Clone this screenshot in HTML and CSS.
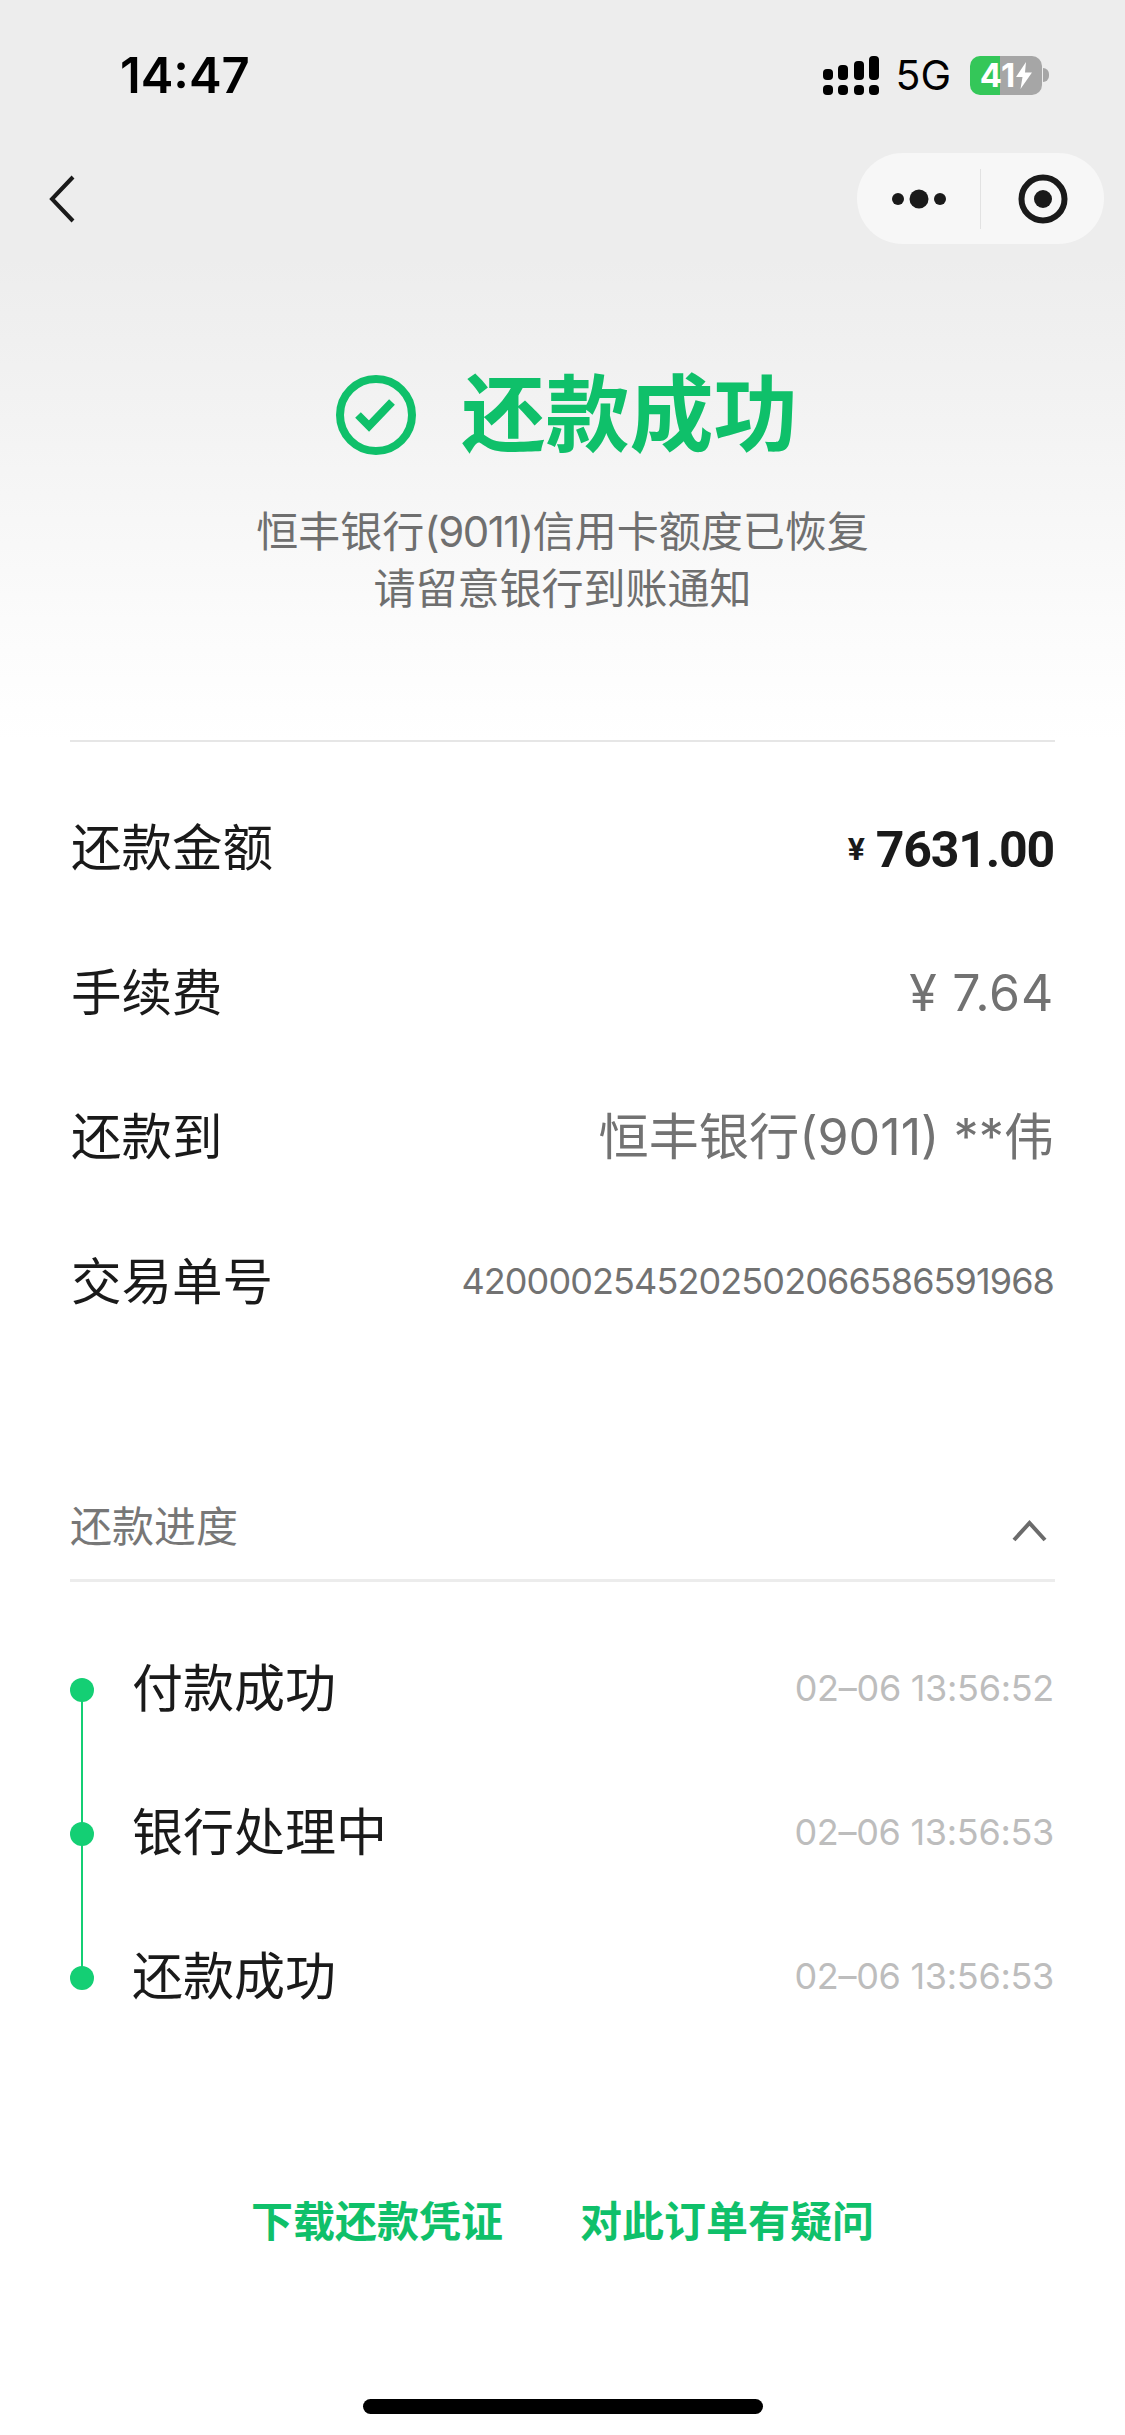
FILE: index.html
```html
<!DOCTYPE html>
<html lang="zh-CN">
<head>
    <meta charset="UTF-8">
    <meta name="viewport" content="width=device-width, initial-scale=1.0">
    <title>还款成功</title>
    <link rel="stylesheet" href="styles.css">
</head>
<body>
    <div class="page">
        <!-- Status bar -->
        <div class="status-bar">
            <span class="clock">14:47</span>
            <div class="status-icons">
                <svg class="signal" width="56" height="39" viewBox="0 0 56 39">
                    <rect x="0" y="13" width="10" height="11" rx="4"/>
                    <rect x="15" y="9" width="10" height="15" rx="4"/>
                    <rect x="31" y="5" width="10" height="19" rx="4"/>
                    <rect x="46" y="0" width="10" height="24" rx="4"/>
                    <rect x="0" y="29" width="10" height="10" rx="4"/>
                    <rect x="15" y="29" width="10" height="10" rx="4"/>
                    <rect x="31" y="29" width="10" height="10" rx="4"/>
                    <rect x="46" y="29" width="10" height="10" rx="4"/>
                </svg>
                <span class="network">5G</span>
                <div class="battery">
                    <span class="battery-level">41</span>
                    <svg width="16" height="27" viewBox="0 0 16 27">
                        <path d="M10 0 L0 15 H6.5 L4.5 27 L16 10.5 H9 Z" fill="#fff"/>
                    </svg>
                </div>
                <span class="battery-nub"></span>
            </div>
        </div>

        <!-- Nav bar -->
        <div class="nav-bar">
            <svg class="back" width="26" height="48" viewBox="0 0 26 48">
                <path d="M24 2 L3 24 L24 46" fill="none" stroke="#1a1a1a" stroke-width="4"/>
            </svg>
            <div class="capsule">
                <div class="capsule-part">
                    <svg width="54" height="20" viewBox="0 0 54 20">
                        <circle cx="6" cy="10" r="6"/>
                        <circle cx="27" cy="10" r="9.5"/>
                        <circle cx="48" cy="10" r="6"/>
                    </svg>
                </div>
                <div class="capsule-line"></div>
                <div class="capsule-part">
                    <svg width="50" height="50" viewBox="0 0 50 50">
                        <circle cx="25" cy="25" r="21.5" fill="none" stroke="#1a1a1a" stroke-width="6"/>
                        <circle cx="25" cy="25" r="9"/>
                    </svg>
                </div>
            </div>
        </div>

        <!-- Result -->
        <div class="hero">
            <div class="hero-title">
                <svg width="80" height="80" viewBox="0 0 80 80">
                    <circle cx="40" cy="40" r="36" fill="none" stroke="#0fc06a" stroke-width="8"/>
                    <path d="M22 40 L33 51 L56 27" fill="none" stroke="#0fc06a" stroke-width="8"/>
                </svg>
                <h1>还款成功</h1>
            </div>
            <p class="hero-note">恒丰银行<span class="tight">(9011)</span>信用卡额度已恢复<br>请留意银行到账通知</p>
        </div>

        <!-- Details -->
        <div class="details">
            <div class="row">
                <span class="label">还款金额</span>
                <span class="amount"><span class="yen">¥</span>7631.00</span>
            </div>
            <div class="row">
                <span class="label">手续费</span>
                <span class="value fee">¥ 7.64</span>
            </div>
            <div class="row">
                <span class="label">还款到</span>
                <span class="value bank">恒丰银行(9011) **伟</span>
            </div>
            <div class="row">
                <span class="label">交易单号</span>
                <span class="order-no">4200002545202502066586591968</span>
            </div>
        </div>

        <!-- Progress -->
        <div class="progress">
            <div class="progress-head">
                <span>还款进度</span>
                <svg width="35" height="22" viewBox="0 0 35 22">
                    <path d="M2 20 L17.5 3 L33 20" fill="none" stroke="#6b6b6b" stroke-width="4"/>
                </svg>
            </div>
            <ul class="steps">
                <li class="step">
                    <span class="dot"></span>
                    <span class="step-name">付款成功</span>
                    <span class="step-time">02–06 13:56:52</span>
                </li>
                <li class="step">
                    <span class="dot"></span>
                    <span class="step-name">银行处理中</span>
                    <span class="step-time">02–06 13:56:53</span>
                </li>
                <li class="step">
                    <span class="dot"></span>
                    <span class="step-name">还款成功</span>
                    <span class="step-time">02–06 13:56:53</span>
                </li>
            </ul>
        </div>

        <div class="actions">
            <a class="action">下载还款凭证</a>
            <a class="action">对此订单有疑问</a>
        </div>

        <div class="home-bar"></div>
    </div>
</body>
</html>
```

FILE: styles.css
```css
* {
    box-sizing: border-box;
}

html, body {
    margin: 0;
    padding: 0;
}

body {
    font-family: Inter, "Noto Sans CJK SC", sans-serif;
    background-color: #fff;
    color: #1a1a1a;
}

.page {
    width: 1125px;
    height: 2435px;
    overflow: hidden;
    background: linear-gradient(180deg, #ededed 0, #ededed 260px, #f3f3f3 420px, #fbfbfb 620px, #fff 740px);
}

/* Status bar */
.status-bar {
    height: 150px;
    padding: 0 76px 0 120px;
    display: flex;
    align-items: center;
    justify-content: space-between;
}

.clock {
    font-size: 49px;
    font-weight: 600;
    color: #000;
}

.status-icons {
    display: flex;
    align-items: center;
}

.signal {
    fill: #000;
}

.network {
    margin-left: 16px;
    margin-right: 19px;
    font-size: 41px;
    color: #000;
}

.battery {
    width: 72px;
    height: 39px;
    border-radius: 10px;
    background: linear-gradient(90deg, #34c759 42%, #a6a6a6 42%);
    display: flex;
    align-items: center;
    justify-content: center;
    gap: 1px;
}

.battery-level {
    font-size: 33px;
    font-weight: 700;
    color: #fff;
}

.battery-nub {
    width: 6px;
    height: 14px;
    margin-left: 1px;
    border-radius: 0 6px 6px 0;
    background-color: #a6a6a6;
}

/* Nav bar */
.nav-bar {
    margin-top: 3px;
    height: 91px;
    padding: 0 21px 0 49px;
    display: flex;
    align-items: center;
    justify-content: space-between;
}

.capsule {
    width: 247px;
    height: 91px;
    border-radius: 46px;
    background-color: #f7f7f7;
    display: flex;
    align-items: center;
    fill: #1a1a1a;
}

.capsule-part {
    flex: 1;
    display: flex;
    justify-content: center;
}

.capsule-line {
    width: 1px;
    height: 60px;
    background-color: #e2e2e2;
}

/* Result */
.hero {
    padding-top: 121px;
    text-align: center;
}

.hero-title {
    display: flex;
    align-items: center;
    justify-content: center;
    gap: 45px;
    padding-left: 9px;
}

.hero-title h1 {
    margin: 0;
    font-size: 84px;
    line-height: 100px;
    font-weight: 700;
    color: #0fc06a;
}

.hero-note {
    margin: 38px 0 0;
    font-size: 42px;
    line-height: 57px;
    color: #6f6f6f;
}

.tight {
    letter-spacing: -1.5px;
}

/* Details */
.details {
    margin: 123px 70px 0 70px;
    padding-top: 34px;
    border-top: 2px solid #e6e6e6;
}

.row {
    height: 144.5px;
    padding-right: 1px;
    display: flex;
    align-items: center;
    justify-content: space-between;
}

/* CJK glyphs sit low in the line box, lift them a bit */
.label {
    padding: 0 0 8px 1px;
    font-size: 50.5px;
}

.amount {
    padding-top: 3px;
    font-family: Roboto, sans-serif;
    font-size: 50px;
    font-weight: 700;
    letter-spacing: -1.2px;
}

.yen {
    font-size: 32px;
    margin-right: 12px;
    vertical-align: 7px;
}

.value {
    font-size: 50px;
    color: #727272;
}

.fee {
    letter-spacing: 0.8px;
}

.bank {
    padding-bottom: 8px;
    font-size: 50.2px;
}

.order-no {
    padding-bottom: 2px;
    font-size: 36px;
    letter-spacing: -0.9px;
    color: #727272;
}

/* Progress */
.progress {
    margin: 143px 70px 0 70px;
}

.progress-head {
    display: flex;
    align-items: center;
    justify-content: space-between;
    padding: 0 8px 22px 0;
    border-bottom: 3px solid #ececec;
    font-size: 42px;
    line-height: 60px;
    color: #777;
}

.progress-head svg {
    margin-top: 8px;
}

.steps {
    list-style: none;
    margin: 36px 0 0;
    padding: 0;
}

.step {
    position: relative;
    height: 144px;
    display: flex;
    align-items: center;
}

.dot {
    width: 24px;
    height: 24px;
    border-radius: 50%;
    background-color: #14cf74;
}

/* connector down to the next dot */
.step:not(:last-child)::after {
    content: "";
    position: absolute;
    left: 11px;
    top: 72px;
    width: 2px;
    height: 144px;
    background-color: #14cf74;
}

.step-name {
    margin-left: 38px;
    padding-bottom: 11px;
    font-size: 51px;
}

.step-time {
    margin-left: auto;
    padding: 0 1px 5px 0;
    font-size: 36px;
    letter-spacing: -0.3px;
    color: #bdbdbd;
}

/* Bottom links */
.actions {
    margin-top: 142px;
    display: flex;
    justify-content: center;
    gap: 77px;
}

.action {
    font-size: 42px;
    line-height: 60px;
    font-weight: 700;
    color: #0fc06a;
}

.home-bar {
    width: 400px;
    height: 15px;
    margin: 147px auto 0;
    border-radius: 8px;
    background-color: #000;
}
```
